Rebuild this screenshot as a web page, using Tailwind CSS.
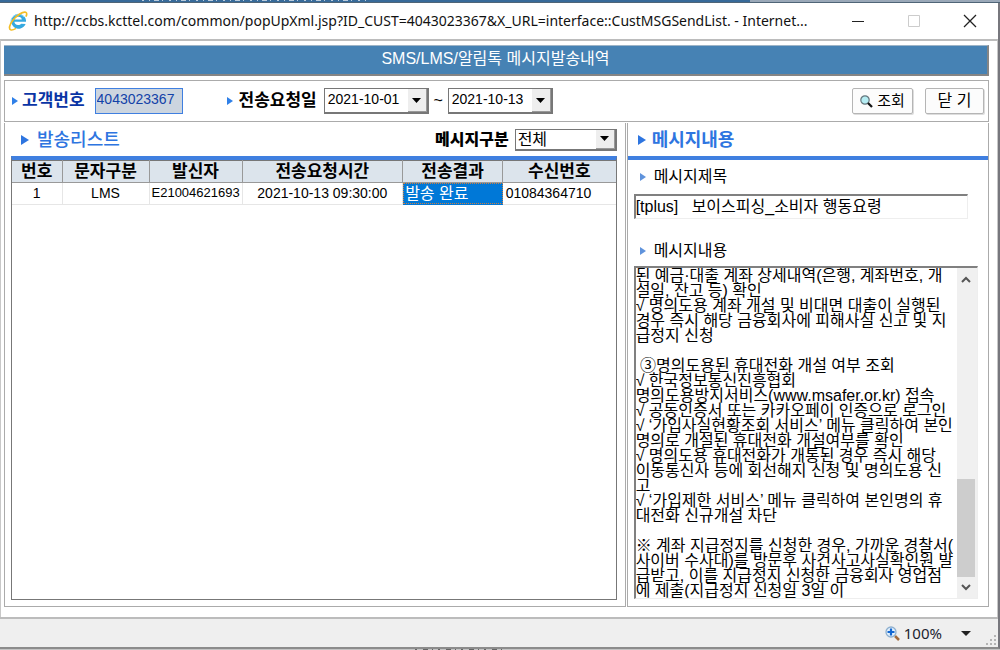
<!DOCTYPE html>
<html lang="ko">
<head>
<meta charset="utf-8">
<meta name="viewport" content="width=device-width, initial-scale=1">
<title>SMS/LMS/알림톡 메시지발송내역</title>
<script src="https://cdn.jsdelivr.net/npm/@tailwindcss/browser@4"></script>
</head>
<body class="bg-[#8e8e8e]">
<div class="flex h-screen flex-col overflow-hidden font-['Liberation_Sans','Noto_Sans_CJK_KR',sans-serif] text-base text-black">
  <!-- Window behind -->
  <div class="flex h-[3px] shrink-0 border-b border-[#4f6577]">
    <div class="w-3/4 bg-[#376a99] pl-[140px]"><svg class="h-[2px] w-[232px]" viewBox="0 0 232 2" aria-hidden="true"><path d="M2 .5h228" stroke="#b9cbdc" stroke-dasharray="2 5 1 4 5 3 1 6"/></svg></div>
    <div class="flex-1 bg-[#9aa8b8]"></div>
  </div>

  <div class="flex min-h-0 flex-1 flex-col border-r-2 border-b-2 border-r-[#77777d] border-b-[#8c8c8c] bg-white">
    <!-- Title bar -->
    <header class="flex h-9 shrink-0 items-center pl-2">
      <svg class="h-5 w-5 shrink-0" viewBox="0 0 20 20" aria-hidden="true">
        <path d="M17.6 12.9a7.4 7.4 0 1 1 .4-3.6v1.5H6.4c.1 2 1.5 3.2 3.6 3.2 1.500 0 2.600-.4 3.200-1.300z" fill="#35a9e0"/>
        <path d="M6.500 8.400h7.300c-.2-1.700-1.500-2.700-3.500-2.700s-3.500 1-3.800 2.700z" fill="#fff"/>
        <path d="M3.200 12.500A7.400 7.400 0 0 1 16 6" fill="none" stroke="#8bd5f3" stroke-width="1"/>
        <path d="M3 19c-2.500-.7-1.800-5 1.700-9.500C8.700 4.400 15 .2 17.700 1.200c1.400.5 1.200 2.500.2 4.500" fill="none" stroke="#f3bd25" stroke-width="1.700"/>
        <path d="M3 19c1.400.3 3-.4 5-1.600" fill="none" stroke="#f3bd25" stroke-width="1.500"/>
      </svg>
      <h1 class="ml-[6px] min-w-0 flex-1 truncate font-['Noto_Sans',sans-serif] text-sm text-[#111]">http://ccbs.kcttel.com/common/popUpXml.jsp?ID_CUST=4043023367&amp;X_URL=interface::CustMSGSendList. - Internet...</h1>
      <button class="flex h-9 w-14 shrink-0 items-center justify-center" aria-label="최소화"><svg class="h-3 w-3" viewBox="0 0 12 12"><path d="M0 6.500h12" stroke="#222"/></svg></button>
      <button class="flex h-9 w-14 shrink-0 items-center justify-center" aria-label="최대화" disabled><svg class="h-3 w-3" viewBox="0 0 12 12"><path d="M.5.5h11v11H.5z" fill="none" stroke="#ccc"/></svg></button>
      <button class="flex h-9 w-14 shrink-0 items-center justify-center" aria-label="창 닫기"><svg class="h-[14px] w-[14px]" viewBox="0 0 14 14"><path d="M1 1l12 12M13 1L1 13" stroke="#222" stroke-width="1.300"/></svg></button>
    </header>

    <main class="flex min-h-0 flex-1 flex-col border-t-2 border-r border-l border-t-[#bcbcbc] border-x-[#c8c8c8] pt-1 pr-2 pb-[10px] pl-[3px]">
      <h2 class="flex h-[31px] shrink-0 items-center justify-center border-t border-r-2 border-b-2 border-t-[#9db4c7] border-r-[#858585] border-b-[#858585] bg-[#4682b4] pb-[2px] leading-5 text-white">SMS/LMS/알림톡 메시지발송내역</h2>

      <!-- Search conditions -->
      <form class="mt-1 flex h-[42px] shrink-0 items-center border border-[#ababab] pr-1 pl-[7px]">
        <svg class="h-2 w-[6px]" viewBox="0 0 6 8"><path d="M0 0l6 4-6 4z" fill="#2f80e8"/></svg>
        <label for="cust" class="ml-1 text-[17px] leading-6 font-bold text-[#0a35a5]">고객번호</label>
        <input id="cust" value="4043023367" readonly class="ml-[10px] h-[26px] w-[88px] border border-[#3f7fe0] bg-[#ccd5df] px-px pb-1 text-sm text-[#1242a8]">
        <svg class="ml-11 h-2 w-[6px]" viewBox="0 0 6 8"><path d="M0 0l6 4-6 4z" fill="#2f80e8"/></svg>
        <label for="from" class="ml-[6px] text-[17px] leading-6 font-bold">전송요청일</label>
        <span class="ml-[7px] flex h-[26px] w-[105px] border border-r-2 border-b-2 border-[#777]">
          <select id="from" class="min-w-0 flex-1 appearance-none bg-white pb-1 pl-[3px] text-sm"><option>2021-10-01</option></select>
          <span class="pointer-events-none flex w-[19px] items-center justify-center border-r border-b border-[#999] bg-[#eee]"><svg class="h-[5px] w-[9px]" viewBox="0 0 9 5"><path d="M0 0h9L4.500 5z"/></svg></span>
        </span>
        <span class="w-[19px] text-center">~</span>
        <span class="flex h-[26px] w-[105px] border border-r-2 border-b-2 border-[#777]">
          <select aria-label="전송요청일 종료" class="min-w-0 flex-1 appearance-none bg-white pb-1 pl-[3px] text-sm"><option>2021-10-13</option></select>
          <span class="pointer-events-none flex w-[19px] items-center justify-center border-r border-b border-[#999] bg-[#eee]"><svg class="h-[5px] w-[9px]" viewBox="0 0 9 5"><path d="M0 0h9L4.500 5z"/></svg></span>
        </span>
        <button type="button" class="ml-auto flex h-[26px] w-[61px] items-center justify-center gap-1 rounded-xs border border-[#b5b5b5] bg-[#fcfcfc] text-[15px] shadow-[1px_1px_0_#ddd]">
          <svg class="h-[13px] w-[13px]" viewBox="0 0 13 13"><circle cx="5" cy="5" r="4.200" fill="#b5edf3" stroke="#66777e" stroke-width="1.200"/><path d="M8 8l4 4" stroke="#151515" stroke-width="2.300"/></svg>조회</button>
        <button type="button" class="ml-3 h-[26px] w-[59px] rounded-xs border border-[#b5b5b5] bg-[#fcfcfc] leading-5 shadow-[1px_1px_0_#ddd]">닫 기</button>
      </form>

      <div class="mt-px grid min-h-0 flex-1 grid-cols-[621fr_363fr]">
        <!-- Sent list -->
        <section class="flex min-h-0 flex-col border-r border-b border-l border-[#ababab] pr-2 pb-[6px] pl-[6px]">
          <div class="flex h-[33px] shrink-0 items-center pl-[10px]">
            <svg class="h-[10px] w-2" viewBox="0 0 8 10"><path d="M0 0l8 5-8 5z" fill="#2e75e0"/></svg>
            <h3 class="ml-2 text-lg leading-6 font-medium text-[#2e75e0]">발송리스트</h3>
            <label for="kind" class="mr-[6px] ml-auto font-black">메시지구분</label>
            <span class="flex h-[22px] w-[102px] border border-r-2 border-b-2 border-[#777]">
              <select id="kind" class="min-w-0 flex-1 appearance-none bg-white pl-[2px] leading-5"><option>전체</option></select>
              <span class="pointer-events-none flex w-[19px] items-center justify-center border-r border-b border-[#999] bg-[#eee]"><svg class="h-[5px] w-[9px]" viewBox="0 0 9 5"><path d="M0 0h9L4.500 5z"/></svg></span>
            </span>
          </div>
          <div class="min-h-0 flex-1 border border-t-4 border-[#777] border-t-[#3f7fe0]">
            <table class="w-full table-fixed border-collapse border-t border-[#777] text-center leading-5 whitespace-nowrap">
              <colgroup><col class="w-[50px]"><col class="w-[87px]"><col class="w-[93px]"><col><col class="w-[100px]"><col class="w-[113px]"></colgroup>
              <thead>
                <tr class="h-[22px] bg-[#dce4ec] text-[17px] font-bold">
                  <th class="border-r border-b border-[#999]">번호</th>
                  <th class="border-r border-b border-[#999]">문자구분</th>
                  <th class="border-r border-b border-[#999]">발신자</th>
                  <th class="border-r border-b border-[#999]">전송요청시간</th>
                  <th class="border-r border-b border-[#999]">전송결과</th>
                  <th class="border-b border-[#999]">수신번호</th>
                </tr>
              </thead>
              <tbody>
                <tr class="h-[22px] text-sm leading-[18px]">
                  <td class="border-r border-b border-[#e6e6e6] pb-[2px]">1</td>
                  <td class="border-r border-b border-[#e6e6e6] pb-[2px]">LMS</td>
                  <td class="overflow-hidden border-r border-b border-[#e6e6e6] pb-[2px] pl-[2px] text-left text-[13px] leading-[18px]">E21004621693</td>
                  <td class="border-r border-b border-[#e6e6e6] pb-[2px]">2021-10-13 09:30:00</td>
                  <td class="bg-[#0078d7] p-0 text-left text-base text-white"><div class="border border-dotted border-[#d08040] pl-px leading-[19px]">발송 완료</div></td>
                  <td class="border-b border-[#e6e6e6] pb-[2px] pl-[3px] text-left">01084364710</td>
                </tr>
              </tbody>
            </table>
          </div>
        </section>

        <!-- Message detail -->
        <section class="ml-px flex min-h-0 flex-col border-r border-b border-l border-[#ababab]">
          <div class="flex h-[37px] shrink-0 items-center border-b-4 border-[#3f7fe0] pl-[10px]">
            <svg class="h-[10px] w-2" viewBox="0 0 8 10"><path d="M0 0l8 5-8 5z" fill="#2e75e0"/></svg>
            <h3 class="ml-[6px] text-lg leading-6 font-bold text-[#2e75e0]">메시지내용</h3>
          </div>
          <div class="flex min-h-0 flex-1 flex-col pr-[10px] pb-[7px] pl-[6px]">
            <div class="flex h-[34px] shrink-0 items-center gap-2 pl-[6px]">
              <svg class="h-2 w-[6px]" viewBox="0 0 6 8"><path d="M0 0l6 4-6 4z" fill="#5f93dc"/></svg>
              <label for="subject">메시지제목</label>
            </div>
            <input id="subject" value="[tplus]   보이스피싱_소비자 행동요령" readonly class="mr-[10px] h-[25px] shrink-0 border border-t-2 border-l-2 border-[#eee] border-t-[#808080] border-l-[#808080] pb-1">
            <div class="mt-4 flex h-[31px] shrink-0 items-center gap-2 pl-[6px]">
              <svg class="h-2 w-[6px]" viewBox="0 0 6 8"><path d="M0 0l6 4-6 4z" fill="#5f93dc"/></svg>
              <label for="body">메시지내용</label>
            </div>
            <div class="flex min-h-0 flex-1 border border-t-2 border-l-2 border-[#eee] border-t-[#808080] border-l-[#808080]">
              <textarea id="body" readonly class="min-w-0 flex-1 resize-none overflow-hidden leading-[15px] whitespace-pre">된 예금·대출 계좌 상세내역(은행, 계좌번호, 개
설일, 잔고 등) 확인
√ 명의도용 계좌 개설 및 비대면 대출이 실행된
경우 즉시 해당 금융회사에 피해사실 신고 및 지
급정지 신청

 ③명의도용된 휴대전화 개설 여부 조회
√ 한국정보통신진흥협회
명의도용방지서비스(www.msafer.or.kr) 접속
√ 공동인증서 또는 카카오페이 인증으로 로그인
√ ‘가입사실현황조회 서비스’ 메뉴 클릭하여 본인
명의로 개설된 휴대전화 개설여부를 확인
√ 명의도용 휴대전화가 개통된 경우 즉시 해당
이동통신사 등에 회선해지 신청 및 명의도용 신
고
√ ‘가입제한 서비스’ 메뉴 클릭하여 본인명의 휴
대전화 신규개설 차단

※ 계좌 지급정지를 신청한 경우, 가까운 경찰서(
사이버 수사대)를 방문후 사건사고사실확인원 발
급받고, 이를 지급정지 신청한 금융회사 영업점
에 제출(지급정지 신청일 3일 이</textarea>
              <div class="flex w-5 shrink-0 flex-col items-center bg-[#f0f0f0] pr-[2px]">
                <svg class="my-2 h-[7px] w-[10px] shrink-0" viewBox="0 0 10 7"><path d="M1 6l4-4 4 4" fill="none" stroke="#555" stroke-width="2"/></svg>
                <div class="grow-[187]"></div>
                <div class="w-[18px] grow-[98] bg-[#cdcdcd]"></div>
                <svg class="my-[7px] h-[7px] w-[10px] shrink-0" viewBox="0 0 10 7"><path d="M1 1l4 4 4-4" fill="none" stroke="#555" stroke-width="2"/></svg>
              </div>
            </div>
          </div>
        </section>
      </div>
    </main>

    <!-- Status bar -->
    <footer class="flex h-[30px] shrink-0 items-center justify-end border-t-2 border-[#bcbcbc] bg-[#efefef] font-['Noto_Sans',sans-serif] text-[15px] text-[#1c2430]">
      <svg class="mr-1 h-[15px] w-[15px]" viewBox="0 0 15 15"><path d="M10 10l4 4" stroke="#a36b3c" stroke-width="2.500"/><circle cx="6" cy="6" r="5" fill="#e4f1fc" stroke="#8fb0cf" stroke-width="1.300"/><path d="M6 2.500v7M2.500 6h7" stroke="#1267d2" stroke-width="2.200"/></svg>
      <span>100%</span>
      <button class="ml-3 flex h-6 w-6 items-center justify-center" aria-label="확대 수준 변경"><svg class="h-[5px] w-[10px]" viewBox="0 0 10 5"><path d="M0 0h10L5 5z" fill="#222"/></svg></button>
      <svg class="mt-4 ml-2 h-3 w-3" viewBox="0 0 12 12" fill="#b5b5b5"><path d="M8 0h2v2H8zM4 4h2v2H4zM8 4h2v2H8zM0 8h2v2H0zM4 8h2v2H4zM8 8h2v2H8z"/></svg>
    </footer>
  </div>
  <div class="h-px shrink-0 bg-[#c4c4c4] pl-[415px]"><svg class="h-px w-[90px]" viewBox="0 0 90 1" aria-hidden="true"><path d="M0 .5h90" stroke="#666" stroke-dasharray="2 6 5 4 1 5"/></svg></div>
</div>
</body>
</html>
